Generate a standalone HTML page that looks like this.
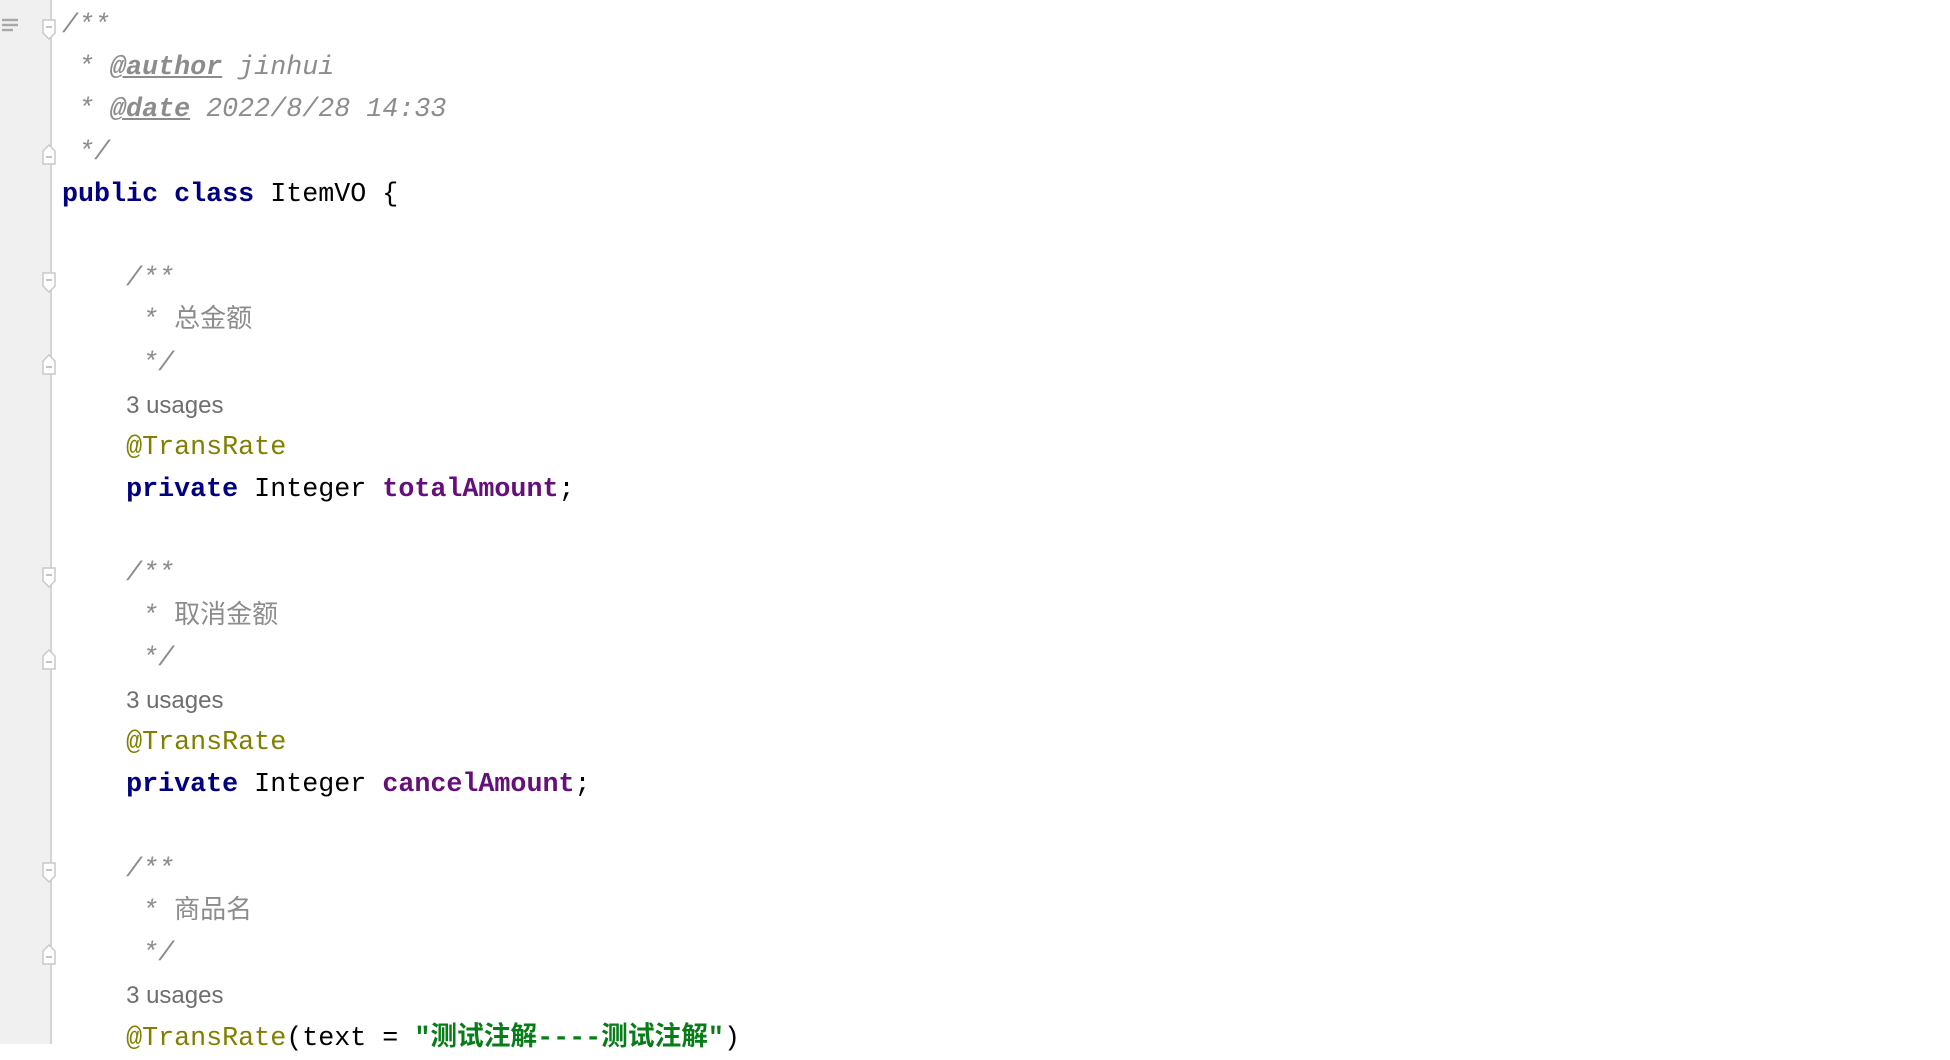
<!DOCTYPE html>
<html><head><meta charset="utf-8"><style>
html,body{margin:0;padding:0;background:#fff;width:1950px;height:1044px;overflow:hidden}
.g{position:absolute;left:0;top:0;width:50px;height:1044px;background:#f0f0f0;border-right:2px solid #d5d5d5}
.code{position:absolute;left:62px;top:5px;font-family:"Liberation Mono","Noto Sans CJK SC",monospace;font-size:26.7px;line-height:42.2px;color:#000}
.l{height:42.2px;white-space:pre;overflow:hidden}
.c{color:#8c8c8c;font-style:italic}
.c .z{font-style:normal;font-family:"Noto Sans CJK SC",sans-serif;line-height:1;font-size:26px}
.t{font-weight:bold;text-decoration:underline}
.k{color:#000080;font-weight:bold}
.f{color:#660e7a;font-weight:bold}
.a{color:#808000}
.s{color:#067d17;font-weight:bold;line-height:1}
.u{color:#6e6e6e;font-family:"Liberation Sans",sans-serif;font-size:24px}
.fm{position:absolute;left:42px;width:14px;height:14px}
</style></head><body>
<div class="g"></div>
<svg style="position:absolute;left:2px;top:18px" width="18" height="14"><g stroke="#a8a8a8" stroke-width="2.4"><line x1="0" y1="2" x2="16" y2="2"/><line x1="0" y1="7" x2="16" y2="7"/><line x1="0" y1="12" x2="11" y2="12"/></g></svg>
<svg class="fm" style="top:19px;height:22px" viewBox="0 0 14 22"><path d="M1 1H13V14L7 20L1 14Z" fill="#fff" stroke="#c8c8c8" stroke-width="1.5"/><line x1="4" y1="8" x2="10" y2="8" stroke="#b0b0b0" stroke-width="1.5"/></svg>
<svg class="fm" style="top:143px;height:22px" viewBox="0 0 14 22"><path d="M1 21H13V8L7 2L1 8Z" fill="#fff" stroke="#c8c8c8" stroke-width="1.5"/><line x1="4" y1="14" x2="10" y2="14" stroke="#b0b0b0" stroke-width="1.5"/></svg>
<svg class="fm" style="top:272px;height:22px" viewBox="0 0 14 22"><path d="M1 1H13V14L7 20L1 14Z" fill="#fff" stroke="#c8c8c8" stroke-width="1.5"/><line x1="4" y1="8" x2="10" y2="8" stroke="#b0b0b0" stroke-width="1.5"/></svg>
<svg class="fm" style="top:353px;height:22px" viewBox="0 0 14 22"><path d="M1 21H13V8L7 2L1 8Z" fill="#fff" stroke="#c8c8c8" stroke-width="1.5"/><line x1="4" y1="14" x2="10" y2="14" stroke="#b0b0b0" stroke-width="1.5"/></svg>
<svg class="fm" style="top:567px;height:22px" viewBox="0 0 14 22"><path d="M1 1H13V14L7 20L1 14Z" fill="#fff" stroke="#c8c8c8" stroke-width="1.5"/><line x1="4" y1="8" x2="10" y2="8" stroke="#b0b0b0" stroke-width="1.5"/></svg>
<svg class="fm" style="top:648px;height:22px" viewBox="0 0 14 22"><path d="M1 21H13V8L7 2L1 8Z" fill="#fff" stroke="#c8c8c8" stroke-width="1.5"/><line x1="4" y1="14" x2="10" y2="14" stroke="#b0b0b0" stroke-width="1.5"/></svg>
<svg class="fm" style="top:862px;height:22px" viewBox="0 0 14 22"><path d="M1 1H13V14L7 20L1 14Z" fill="#fff" stroke="#c8c8c8" stroke-width="1.5"/><line x1="4" y1="8" x2="10" y2="8" stroke="#b0b0b0" stroke-width="1.5"/></svg>
<svg class="fm" style="top:943px;height:22px" viewBox="0 0 14 22"><path d="M1 21H13V8L7 2L1 8Z" fill="#fff" stroke="#c8c8c8" stroke-width="1.5"/><line x1="4" y1="14" x2="10" y2="14" stroke="#b0b0b0" stroke-width="1.5"/></svg>
<div class="code">
<div class="l c">/**</div>
<div class="l c"> * <span class="t">@author</span> jinhui</div>
<div class="l c"> * <span class="t">@date</span> 2022/8/28 14:33</div>
<div class="l c"> */</div>
<div class="l"><span class="k">public class</span> ItemVO {</div>
<div class="l"> </div>
<div class="l c">    /**</div>
<div class="l c">     * <span class="z">总金额</span></div>
<div class="l c">     */</div>
<div class="l">    <span class="u">3 usages</span></div>
<div class="l">    <span class="a">@TransRate</span></div>
<div class="l">    <span class="k">private</span> Integer <span class="f">totalAmount</span>;</div>
<div class="l"> </div>
<div class="l c">    /**</div>
<div class="l c">     * <span class="z">取消金额</span></div>
<div class="l c">     */</div>
<div class="l">    <span class="u">3 usages</span></div>
<div class="l">    <span class="a">@TransRate</span></div>
<div class="l">    <span class="k">private</span> Integer <span class="f">cancelAmount</span>;</div>
<div class="l"> </div>
<div class="l c">    /**</div>
<div class="l c">     * <span class="z">商品名</span></div>
<div class="l c">     */</div>
<div class="l">    <span class="u">3 usages</span></div>
<div class="l">    <span class="a">@TransRate</span>(text = <span class="s">"测试注解----测试注解"</span>)</div>
</div>
</body></html>
